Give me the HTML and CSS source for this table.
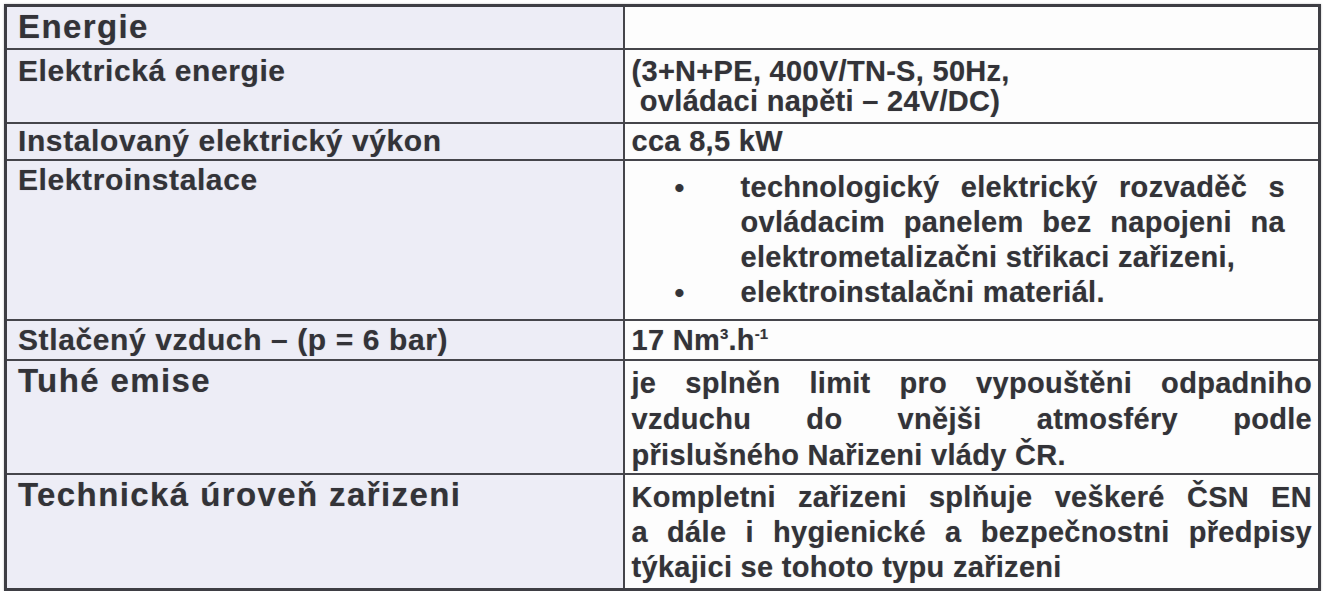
FILE: index.html
```html
<!DOCTYPE html>
<html lang="cs">
<head>
<meta charset="utf-8">
<title>Energie</title>
<link rel="stylesheet" href="styles.css">
</head>
<body>
<table class="spec">
  <colgroup><col class="col-label"><col class="col-value"></colgroup>
  <tr class="r1"><th class="big">Energie</th><td></td></tr>
  <tr class="r2"><th>Elektrická energie</th><td>(3+N+PE, 400V/TN-S, 50Hz,<br>&nbsp;ovládaci napěti – 24V/DC)</td></tr>
  <tr class="r3"><th>Instalovaný elektrický výkon</th><td>cca 8,5 kW</td></tr>
  <tr class="r4"><th>Elektroinstalace</th><td>
    <ul class="bullets">
      <li><span class="dot">•</span><span class="item"><span class="line">technologický elektrický rozvaděč s</span><span class="line">ovládacim panelem bez napojeni na</span><span class="line last">elektrometalizačni střikaci zařizeni,</span></span></li>
      <li><span class="dot">•</span><span class="item"><span class="line last">elektroinstalačni materiál.</span></span></li>
    </ul>
  </td></tr>
  <tr class="r5"><th>Stlačený vzduch – (p = 6 bar)</th><td>17 Nm<sup>3</sup>.h<sup>-1</sup></td></tr>
  <tr class="r6"><th class="big">Tuhé emise</th><td><span class="line">je splněn limit pro vypouštěni odpadniho</span><span class="line">vzduchu do vnějši atmosféry podle</span><span class="line last">přislušného Nařizeni vlády ČR.</span></td></tr>
  <tr class="r7"><th class="big">Technická úroveň zařizeni</th><td><span class="line">Kompletni zařizeni splňuje veškeré ČSN EN</span><span class="line">a dále i hygienické a bezpečnostni předpisy</span><span class="line last">týkajici se tohoto typu zařizeni</span></td></tr>
</table>
</body>
</html>
```

FILE: styles.css
```css
html, body {
  margin: 0;
  padding: 0;
  background: #ffffff;
}

body {
  padding: 4px 0 0 4px;
  font-family: "Liberation Sans", Arial, sans-serif;
  color: #333338;
}

.spec {
  border-collapse: collapse;
  table-layout: fixed;
  width: 1317px;
  border: 3px solid #3e3e44;
  box-shadow: 0 0 2px rgba(0, 0, 0, 0.25);
}

.col-label { width: 618px; }
.col-value { width: auto; }

.spec th,
.spec td {
  border: 2px solid #45454b;
  vertical-align: top;
  text-align: left;
  font-weight: bold;
  font-size: 29px;
  letter-spacing: 0.3px;
  line-height: 34px;
  padding: 3px 6px 0 7px;
  text-shadow: 0 0 1px rgba(50, 50, 55, 0.35);
}

.spec th {
  background: #ededf6;
  padding-left: 11px;
  font-size: 30px;
  letter-spacing: 0.6px;
}

.spec td {
  background: #fdfdfd;
}

.spec th.big {
  font-size: 33px;
  letter-spacing: 1.4px;
  line-height: 36px;
  padding-top: 2px;
}

.r1 { height: 43px; }
.r2 { height: 74px; }
.r3 { height: 37px; }
.r4 { height: 160px; }
.r5 { height: 40px; }
.r6 { height: 112px; }
.r7 { height: 116px; }

.r2 th, .r2 td { line-height: 30px; padding-top: 6px; }
.r3 th, .r3 td { line-height: 30px; padding-top: 2px; }
.r4 th { padding-top: 2px; }
.r5 th, .r5 td { line-height: 30px; padding-top: 4px; }
.r6 th, .r6 td { padding-top: 4px; line-height: 36px; }
.r7 th, .r7 td { padding-top: 5px; line-height: 35px; }

.line {
  display: block;
  text-align: justify;
  text-align-last: justify;
}

.line.last {
  text-align-last: left;
}

.bullets {
  list-style: none;
  margin: 0 27px 0 43px;
  padding: 6px 0 0 0;
  line-height: 35px;
}

.bullets li {
  display: grid;
  grid-template-columns: 66px 1fr;
}

.dot {
  font-size: 28px;
}

sup {
  font-size: 15px;
  line-height: 0;
  vertical-align: 11px;
  letter-spacing: 0;
}
```
